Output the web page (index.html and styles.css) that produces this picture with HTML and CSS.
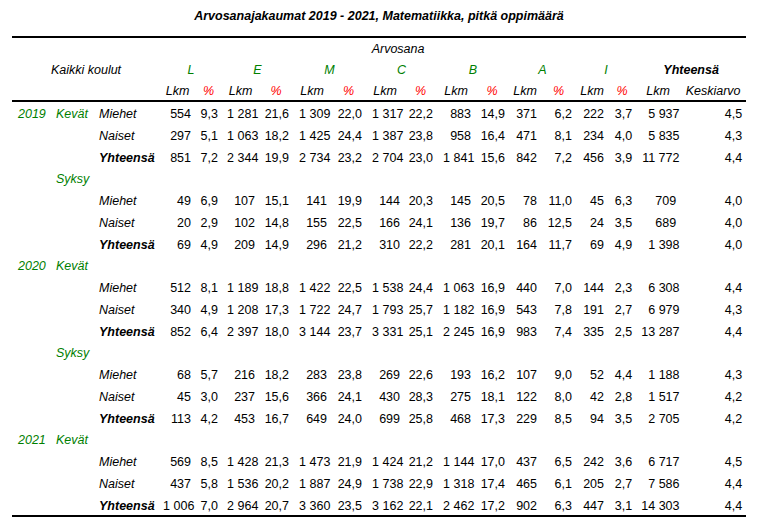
FILE: index.html
```html
<!DOCTYPE html>
<html lang="fi">
<head>
<meta charset="utf-8">
<title>Arvosanajakaumat 2019 - 2021</title>
<link rel="stylesheet" href="styles.css">
</head>
<body>
<div class="page">
  <h1 class="title">Arvosanajakaumat 2019 - 2021, Matematiikka, pitkä oppimäärä</h1>
  <table class="grid">
    <colgroup>
      <col><col><col>
      <col><col><col><col><col><col><col><col><col><col><col><col><col><col>
      <col><col>
    </colgroup>
    <thead>
      <tr>
        <th colspan="3"></th>
        <th colspan="14">Arvosana</th>
        <th colspan="2"></th>
      </tr>
      <tr>
        <th colspan="3">Kaikki koulut</th>
        <th colspan="2" class="grade">L</th>
        <th colspan="2" class="grade">E</th>
        <th colspan="2" class="grade">M</th>
        <th colspan="2" class="grade">C</th>
        <th colspan="2" class="grade">B</th>
        <th colspan="2" class="grade">A</th>
        <th colspan="2" class="grade">I</th>
        <th colspan="2" class="total">Yhteensä</th>
      </tr>
      <tr class="units">
        <th colspan="3"></th>
        <th>Lkm</th><th class="pct">%</th>
        <th>Lkm</th><th class="pct">%</th>
        <th>Lkm</th><th class="pct">%</th>
        <th>Lkm</th><th class="pct">%</th>
        <th>Lkm</th><th class="pct">%</th>
        <th>Lkm</th><th class="pct">%</th>
        <th>Lkm</th><th class="pct">%</th>
        <th>Lkm</th><th>Keskiarvo</th>
      </tr>
    </thead>
    <tbody>
      <tr>
        <td class="lbl grp">2019</td><td class="lbl grp">Kevät</td><td class="lbl">Miehet</td>
        <td>554</td><td>9,3</td><td><span class="k">1 281</span></td><td>21,6</td><td><span class="k">1 309</span></td><td>22,0</td><td><span class="k">1 317</span></td><td>22,2</td><td>883</td><td>14,9</td><td>371</td><td>6,2</td><td>222</td><td>3,7</td><td><span class="k">5 937</span></td><td>4,5</td>
      </tr>
      <tr>
        <td></td><td></td><td class="lbl">Naiset</td>
        <td>297</td><td>5,1</td><td><span class="k">1 063</span></td><td>18,2</td><td><span class="k">1 425</span></td><td>24,4</td><td><span class="k">1 387</span></td><td>23,8</td><td>958</td><td>16,4</td><td>471</td><td>8,1</td><td>234</td><td>4,0</td><td><span class="k">5 835</span></td><td>4,3</td>
      </tr>
      <tr>
        <td></td><td></td><td class="lbl sum">Yhteensä</td>
        <td>851</td><td>7,2</td><td><span class="k">2 344</span></td><td>19,9</td><td><span class="k">2 734</span></td><td>23,2</td><td><span class="k">2 704</span></td><td>23,0</td><td><span class="k">1 841</span></td><td>15,6</td><td>842</td><td>7,2</td><td>456</td><td>3,9</td><td><span class="k">11 772</span></td><td>4,4</td>
      </tr>
      <tr>
        <td></td><td class="lbl grp">Syksy</td><td colspan="17"></td>
      </tr>
      <tr>
        <td></td><td></td><td class="lbl">Miehet</td>
        <td>49</td><td>6,9</td><td>107</td><td>15,1</td><td>141</td><td>19,9</td><td>144</td><td>20,3</td><td>145</td><td>20,5</td><td>78</td><td>11,0</td><td>45</td><td>6,3</td><td>709</td><td>4,0</td>
      </tr>
      <tr>
        <td></td><td></td><td class="lbl">Naiset</td>
        <td>20</td><td>2,9</td><td>102</td><td>14,8</td><td>155</td><td>22,5</td><td>166</td><td>24,1</td><td>136</td><td>19,7</td><td>86</td><td>12,5</td><td>24</td><td>3,5</td><td>689</td><td>4,0</td>
      </tr>
      <tr>
        <td></td><td></td><td class="lbl sum">Yhteensä</td>
        <td>69</td><td>4,9</td><td>209</td><td>14,9</td><td>296</td><td>21,2</td><td>310</td><td>22,2</td><td>281</td><td>20,1</td><td>164</td><td>11,7</td><td>69</td><td>4,9</td><td><span class="k">1 398</span></td><td>4,0</td>
      </tr>
      <tr>
        <td class="lbl grp">2020</td><td class="lbl grp">Kevät</td><td colspan="17"></td>
      </tr>
      <tr>
        <td></td><td></td><td class="lbl">Miehet</td>
        <td>512</td><td>8,1</td><td><span class="k">1 189</span></td><td>18,8</td><td><span class="k">1 422</span></td><td>22,5</td><td><span class="k">1 538</span></td><td>24,4</td><td><span class="k">1 063</span></td><td>16,9</td><td>440</td><td>7,0</td><td>144</td><td>2,3</td><td><span class="k">6 308</span></td><td>4,4</td>
      </tr>
      <tr>
        <td></td><td></td><td class="lbl">Naiset</td>
        <td>340</td><td>4,9</td><td><span class="k">1 208</span></td><td>17,3</td><td><span class="k">1 722</span></td><td>24,7</td><td><span class="k">1 793</span></td><td>25,7</td><td><span class="k">1 182</span></td><td>16,9</td><td>543</td><td>7,8</td><td>191</td><td>2,7</td><td><span class="k">6 979</span></td><td>4,3</td>
      </tr>
      <tr>
        <td></td><td></td><td class="lbl sum">Yhteensä</td>
        <td>852</td><td>6,4</td><td><span class="k">2 397</span></td><td>18,0</td><td><span class="k">3 144</span></td><td>23,7</td><td><span class="k">3 331</span></td><td>25,1</td><td><span class="k">2 245</span></td><td>16,9</td><td>983</td><td>7,4</td><td>335</td><td>2,5</td><td><span class="k">13 287</span></td><td>4,4</td>
      </tr>
      <tr>
        <td></td><td class="lbl grp">Syksy</td><td colspan="17"></td>
      </tr>
      <tr>
        <td></td><td></td><td class="lbl">Miehet</td>
        <td>68</td><td>5,7</td><td>216</td><td>18,2</td><td>283</td><td>23,8</td><td>269</td><td>22,6</td><td>193</td><td>16,2</td><td>107</td><td>9,0</td><td>52</td><td>4,4</td><td><span class="k">1 188</span></td><td>4,3</td>
      </tr>
      <tr>
        <td></td><td></td><td class="lbl">Naiset</td>
        <td>45</td><td>3,0</td><td>237</td><td>15,6</td><td>366</td><td>24,1</td><td>430</td><td>28,3</td><td>275</td><td>18,1</td><td>122</td><td>8,0</td><td>42</td><td>2,8</td><td><span class="k">1 517</span></td><td>4,2</td>
      </tr>
      <tr>
        <td></td><td></td><td class="lbl sum">Yhteensä</td>
        <td>113</td><td>4,2</td><td>453</td><td>16,7</td><td>649</td><td>24,0</td><td>699</td><td>25,8</td><td>468</td><td>17,3</td><td>229</td><td>8,5</td><td>94</td><td>3,5</td><td><span class="k">2 705</span></td><td>4,2</td>
      </tr>
      <tr>
        <td class="lbl grp">2021</td><td class="lbl grp">Kevät</td><td colspan="17"></td>
      </tr>
      <tr>
        <td></td><td></td><td class="lbl">Miehet</td>
        <td>569</td><td>8,5</td><td><span class="k">1 428</span></td><td>21,3</td><td><span class="k">1 473</span></td><td>21,9</td><td><span class="k">1 424</span></td><td>21,2</td><td><span class="k">1 144</span></td><td>17,0</td><td>437</td><td>6,5</td><td>242</td><td>3,6</td><td><span class="k">6 717</span></td><td>4,5</td>
      </tr>
      <tr>
        <td></td><td></td><td class="lbl">Naiset</td>
        <td>437</td><td>5,8</td><td><span class="k">1 536</span></td><td>20,2</td><td><span class="k">1 887</span></td><td>24,9</td><td><span class="k">1 738</span></td><td>22,9</td><td><span class="k">1 318</span></td><td>17,4</td><td>465</td><td>6,1</td><td>205</td><td>2,7</td><td><span class="k">7 586</span></td><td>4,4</td>
      </tr>
      <tr>
        <td></td><td></td><td class="lbl sum">Yhteensä</td>
        <td><span class="k">1 006</span></td><td>7,0</td><td><span class="k">2 964</span></td><td>20,7</td><td><span class="k">3 360</span></td><td>23,5</td><td><span class="k">3 162</span></td><td>22,1</td><td><span class="k">2 462</span></td><td>17,2</td><td>902</td><td>6,3</td><td>447</td><td>3,1</td><td><span class="k">14 303</span></td><td>4,4</td>
      </tr>
    </tbody>
  </table>
</div>
</body>
</html>
```
FILE: styles.css
```css
body {
  margin: 0;
  background: #ffffff;
  color: #000000;
  font-family: "Liberation Sans", Arial, sans-serif;
  font-size: 12.5px;
}

.page {
  padding: 9px 18px 0 12px;
}

.title {
  margin: 0 0 12px;
  font-size: 12.5px;
  line-height: 15px;
  font-weight: bold;
  font-style: italic;
  text-align: center;
}

.grid {
  width: 734px;
  table-layout: fixed;
  border-collapse: separate;
  border-spacing: 0;
  border-top: 2px solid #000;
  border-bottom: 2px solid #000;
}

.grid col:nth-child(1)  { width: 38px; }
.grid col:nth-child(2)  { width: 43px; }
.grid col:nth-child(3)  { width: 67px; }
.grid col:nth-child(4)  { width: 35px; }
.grid col:nth-child(5)  { width: 27px; }
.grid col:nth-child(6)  { width: 37px; }
.grid col:nth-child(7)  { width: 34px; }
.grid col:nth-child(8)  { width: 38px; }
.grid col:nth-child(9)  { width: 35px; }
.grid col:nth-child(10) { width: 38px; }
.grid col:nth-child(11) { width: 33px; }
.grid col:nth-child(12) { width: 38px; }
.grid col:nth-child(13) { width: 34px; }
.grid col:nth-child(14) { width: 32px; }
.grid col:nth-child(15) { width: 35px; }
.grid col:nth-child(16) { width: 32px; }
.grid col:nth-child(17) { width: 28px; }
.grid col:nth-child(18) { width: 44px; }
.grid col:nth-child(19) { width: 66px; }

.grid th,
.grid td {
  padding: 0;
  white-space: nowrap;
}

.grid th {
  height: 19px;
  padding-top: 2px;
  line-height: 19px;
  font-weight: normal;
  font-style: italic;
  text-align: center;
}

.grid .units th {
  height: 18px;
  line-height: 18px;
  border-bottom: 2px solid #000;
}

.grid td {
  height: 18.75px;
  padding-top: 3px;
  line-height: 18.75px;
  text-align: right;
  padding-right: 4px;
}

.grid td.lbl {
  text-align: left;
  padding-left: 6px;
  padding-right: 0;
  font-style: italic;
}

.grid .grade,
.grid .grp {
  color: #008000;
}

.grid .pct {
  color: #ff0000;
}

.grid .total,
.grid .sum {
  font-weight: bold;
}

.k {
  margin-right: -3.4px;
}
```
